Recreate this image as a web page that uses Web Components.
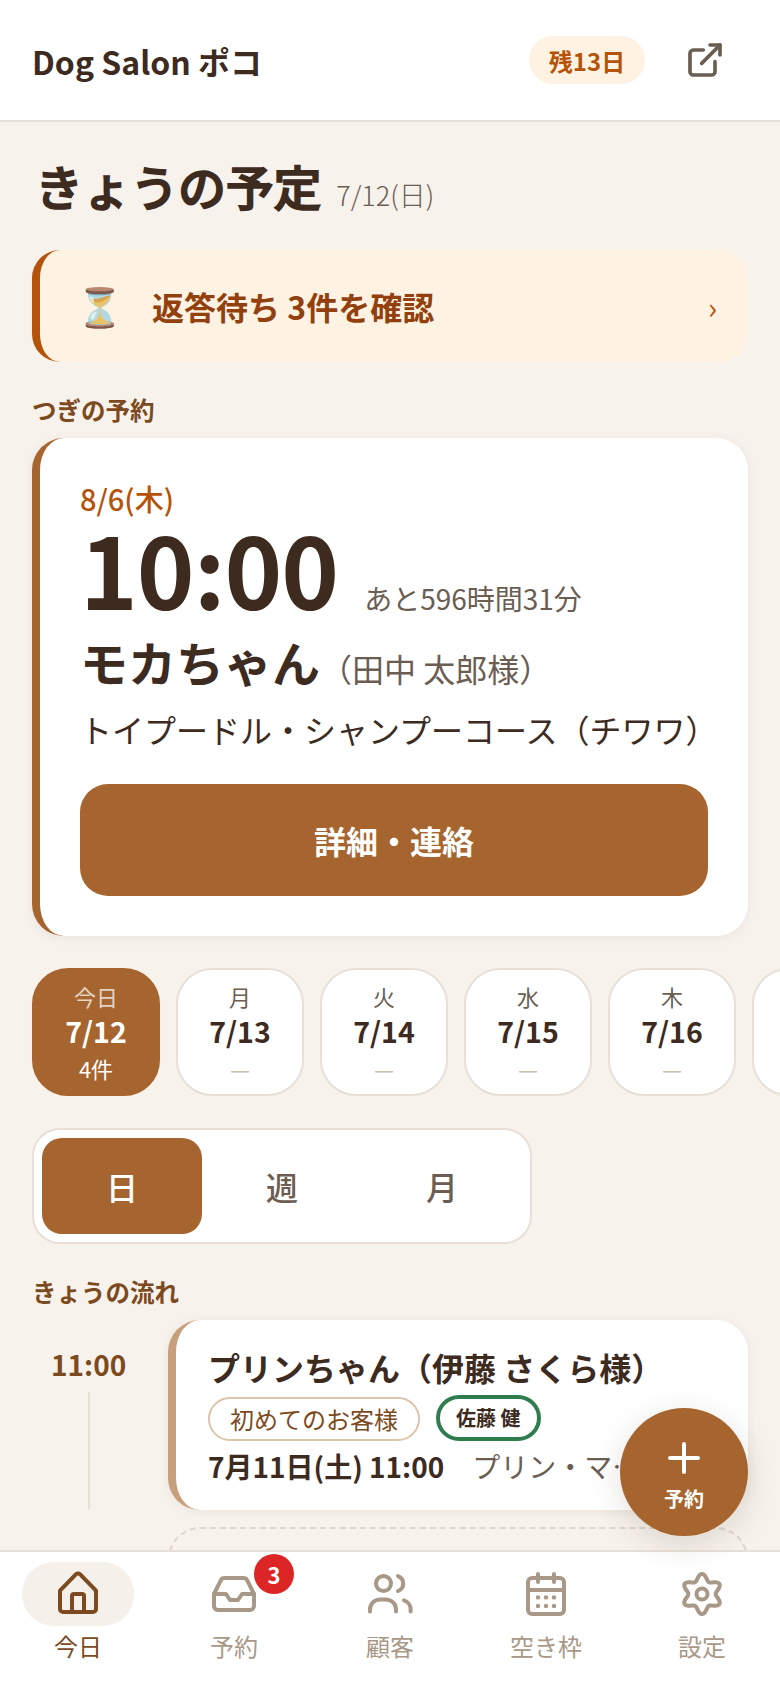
<!DOCTYPE html>
<html lang="ja"><head><meta charset="utf-8"><title>Dog Salon ポコ</title>
<style>
html,body{margin:0;padding:0;height:100%;background:#f7f2ec;overflow:hidden}
body{font-family:"Noto Sans CJK JP","Noto Sans",sans-serif;color:#3d2b1f;width:780px;height:1688px;position:relative;overflow:hidden}
</style></head><body>
<app-shell></app-shell>
<script>
const FONT='"Noto Sans CJK JP","Noto Sans",sans-serif';
function def(name,css,html){
  customElements.define(name,class extends HTMLElement{
    constructor(){super();const r=this.attachShadow({mode:'open'});r.innerHTML='<style>'+css+'</style>'+(typeof html==='function'?html(this):html);}
  });
}
def('app-header',`:host{display:flex;align-items:center;height:120px;border-bottom:2px solid #e8dfd6;background:#fff;padding:0 32px;box-sizing:content-box}
.t{flex:1;font-size:32px;font-weight:700;line-height:1;padding-top:2px}
.p{display:flex;align-items:center;justify-content:center;width:116px;height:48px;border-radius:24px;background:#fef3e2;color:#b45309;font-size:24px;font-weight:700;margin-right:40px}
svg{display:block;margin-right:23px}`,
`<div class="t"><slot></slot></div><div class="p">残13日</div>
<svg width="40" height="40" viewBox="0 0 24 24" fill="none" stroke="#6b5d52" stroke-width="2.2" stroke-linecap="round" stroke-linejoin="round"><path d="M18 13v6a2 2 0 0 1-2 2H5a2 2 0 0 1-2-2V8a2 2 0 0 1 2-2h6"/><path d="M15 3h6v6"/><path d="M10 14L21 3"/></svg>`);

def('page-title',`:host{display:flex;align-items:baseline;padding:37px 35px 0;height:88px;box-sizing:border-box}
h1{margin:0;font-size:48px;font-weight:500;line-height:52px;-webkit-text-stroke:1.6px #3d2b1f;letter-spacing:-.3px}
span{font-size:27px;font-weight:200;color:#6b5d52;margin-left:15px;letter-spacing:0}`,
`<h1><slot></slot></h1><span><slot name="sub"></slot></span>`);

def('notice-banner',`:host{display:flex;align-items:center;height:112px;margin:40px 32px 0;border-left:8px solid #b45309;border-radius:28px;background:#fef3e2;box-sizing:border-box;color:#92400e;font-weight:700;padding-left:36px;padding-right:31px}
.e{width:76px;flex:none;font-size:38px;line-height:1;font-weight:400;font-family:"Noto Color Emoji",${FONT};margin-top:4px;filter:hue-rotate(-8deg) saturate(.62)}
.m{flex:1;font-size:32px}
.c{font-size:30px;font-weight:400;color:#b45309}`,
`<span class="e">⏳</span><span class="m"><slot></slot></span><span class="c">›</span>`);

def('section-label',`:host{display:block;font-size:24.5px;font-weight:700;color:#7c4a1e;line-height:36px;margin:0 32px}`,`<slot></slot>`);

def('next-card',`:host{display:block;margin:0 32px;background:#fff;border-left:8px solid #a6652e;border-radius:32px;box-shadow:0 2px 12px rgba(60,40,20,.06);box-sizing:border-box;height:498px;padding:42px 40px 40px 40px}
.d{font-size:29px;font-weight:500;color:#b45309;line-height:36px}
.r{display:flex;align-items:baseline;height:109px;padding-top:6px}
.t{font-size:98px;font-weight:700;line-height:90px;letter-spacing:-1px}
.a{font-size:28px;color:#6b5d52;margin-left:26px}
.n{font-size:48px;font-weight:700;line-height:60px;white-space:nowrap}
.n span{font-size:32px;font-weight:400;color:#6b5d52}
.s{font-size:32px;line-height:44px;margin-top:9px;white-space:nowrap}
button{display:block;width:100%;height:112px;border:0;border-radius:28px;background:#a6652e;color:#fff;font:700 32px ${FONT};margin-top:33px}`,
`<div class="d">8/6(木)</div><div class="r"><span class="t">10:00</span><span class="a">あと596時間31分</span></div>
<div class="n">モカちゃん<span>（田中 太郎様）</span></div><div class="s">トイプードル・シャンプーコース（チワワ）</div><button>詳細・連絡</button>`);

def('day-strip',`:host{display:flex;gap:16px;margin-top:32px;padding-left:32px;overflow:hidden;width:780px;box-sizing:border-box}`,`<slot></slot>`);
def('day-chip',`:host{flex:none;display:flex;flex-direction:column;align-items:center;width:128px;height:128px;border:2px solid #e8dfd6;border-radius:36px;background:#fff;box-sizing:border-box;padding-top:10px}
:host([active]){background:#a6652e;border-color:#a6652e;color:#fff}
.l{font-size:22px;line-height:32px;color:#6b5d52}
:host([active]) .l{color:rgba(255,255,255,.72)}
.d{font-size:28.5px;font-weight:700;line-height:38px}
.c{font-size:22px;line-height:32px;color:#c8bdb2;margin-top:2px}
:host([active]) .c{color:#fff}`,
t=>`<div class="l">${t.getAttribute('l')}</div><div class="d">${t.getAttribute('d')}</div><div class="c">${t.getAttribute('c')}</div>`);

def('view-switch',`:host{display:flex;width:500px;height:116px;margin:32px 0 0 32px;border:2px solid #e8dfd6;border-radius:28px;background:#fff;box-sizing:border-box;padding:8px}
div{width:160px;display:flex;align-items:center;justify-content:center;font-size:32px;font-weight:500;color:#6b5d52;border-radius:20px}
.on{background:#a6652e;color:#fff}`,
`<div class="on">日</div><div>週</div><div>月</div>`);

def('flow-row',`:host{display:flex;margin:0 32px 0 0;height:190px}
.tc{width:168px;flex:none;position:relative;box-sizing:border-box}
.tm{position:absolute;left:51px;top:22px;font-size:28px;font-weight:700;color:#7c4a1e;line-height:44px}
.ln{position:absolute;left:88px;top:72px;bottom:0;width:2px;background:#e8dfd6}
.cd{flex:1;min-width:0;background:#fff;border-left:8px solid #c89f7c;border-radius:32px;box-shadow:0 2px 12px rgba(60,40,20,.06);box-sizing:border-box;padding:25px 32px 0 32px;overflow:hidden}
.h{font-size:32px;font-weight:700;line-height:44px;white-space:nowrap}
.tags{display:flex;align-items:center;gap:16px;margin-top:6px;height:46px}
.tag{height:44px;border:2px solid #dcc4ac;border-radius:22px;font-size:24px;line-height:40px;padding:0 20px;color:#7c4a1e;box-sizing:border-box;margin-top:2px}
.st{height:46px;border:4px solid #2f7d4f;border-radius:23px;font-size:20px;font-weight:700;line-height:38px;padding:0 16px;box-sizing:border-box}
.b{display:flex;gap:28px;font-size:28px;line-height:40px;white-space:nowrap;margin-top:5px}
.b b{font-weight:700}.b span{color:#6b5d52}`,
`<div class="tc"><div class="tm">11:00</div><div class="ln"></div></div>
<div class="cd"><div class="h">プリンちゃん（伊藤 さくら様）</div><div class="tags"><span class="tag">初めてのお客様</span><span class="st">佐藤 健</span></div>
<div class="b"><b>7月11日(土) 11:00</b><span>プリン・マ…</span></div></div>`);

def('open-slot',`:host{display:block;height:120px;margin:17px 32px 0 168px;border:2px dashed #e0d6cb;border-radius:32px;box-sizing:border-box}`,``);

const gear=(()=>{let p='';for(let i=0;i<=120;i++){const a=i/120*Math.PI*2;const r=8.35+1.6*Math.cos(6*a)+0.1*Math.cos(12*a);p+=(i?'L':'M')+(12+r*Math.sin(a)).toFixed(2)+' '+(12-r*Math.cos(a)).toFixed(2)}return p+'Z'})();
const ICONS={
 home:`<path d="M3 10.3 10.9 2.2a1.6 1.6 0 0 1 2.2 0L21 10.3V19.5a1.5 1.5 0 0 1-1.5 1.5h-15A1.5 1.5 0 0 1 3 19.5z"/><path d="M9 21v-8a1 1 0 0 1 1-1h4a1 1 0 0 1 1 1v8"/>`,
 inbox:`<path d="M22 12h-6l-2 3h-4l-2-3H2"/><path d="M5.45 5.11 2 12v6a2 2 0 0 0 2 2h16a2 2 0 0 0 2-2v-6l-3.45-6.89A2 2 0 0 0 16.76 4H7.24a2 2 0 0 0-1.79 1.11z"/>`,
 users:`<circle cx="8.75" cy="6.75" r="3.75"/><path d="M2 20.75v-1a5 5 0 0 1 5-5h3a5 5 0 0 1 5 5v1"/><path d="M16 3a4 4 0 0 1 0 7.5"/><path d="M19 15.2a4.5 4.5 0 0 1 3.3 4.3v1.25"/>`,
 cal:`<rect x="3" y="4" width="18" height="18" rx="2"/><path d="M8 2v4M16 2v4M3 10h18"/><g fill="currentColor" stroke="none"><circle cx="8" cy="13.7" r="1.1"/><circle cx="12" cy="13.7" r="1.1"/><circle cx="16" cy="13.7" r="1.1"/><circle cx="8" cy="18" r="1.1"/><circle cx="12" cy="18" r="1.1"/><circle cx="16" cy="18" r="1.1"/></g>`,
 gear:`<path d="${gear}"/><circle cx="12" cy="12" r="2.75"/>`
};
def('nav-item',`:host{flex:1;position:relative;display:flex;flex-direction:column;align-items:center;color:#a89888;font-size:24px;padding-top:10px}
:host([active]){color:#7c4a1e}
.i{width:112px;height:64px;border-radius:32px;display:flex;align-items:center;justify-content:center}
:host([active]) .i{background:#f5f0ea}
svg{display:block}
.l{line-height:36px;margin-top:2px}
.bd{position:absolute;left:98px;top:2px;width:40px;height:40px;border-radius:50%;background:#dc2626;color:#fff;font-size:22px;font-weight:700;display:flex;align-items:center;justify-content:center}`,
t=>`<div class="i"><svg width="48" height="48" viewBox="0 0 24 24" fill="none" stroke="currentColor" stroke-width="2" stroke-linecap="round" stroke-linejoin="round">${ICONS[t.getAttribute('icon')]}</svg></div><div class="l"><slot></slot></div>${t.hasAttribute('badge')?`<div class="bd">${t.getAttribute('badge')}</div>`:''}`);

def('bottom-nav',`:host{position:absolute;left:0;right:0;bottom:0;height:138px;background:#fff;border-top:2px solid #e8dfd6;box-sizing:border-box;display:flex}`,`<slot></slot>`);
def('fab-button',`:host{position:absolute;left:620px;top:1408px;width:128px;height:128px;border-radius:50%;background:#a6652e;color:#fff;display:flex;flex-direction:column;align-items:center;box-shadow:0 8px 32px rgba(60,40,20,.14);font-size:20px;font-weight:700;z-index:2}
svg{display:block;margin-top:30px}
span{line-height:28px;margin-top:7px}`,
`<svg width="40" height="40" viewBox="0 0 40 40" fill="none" stroke="#fff" stroke-width="4" stroke-linecap="round"><path d="M20 6v28M6 20h28"/></svg><span>予約</span>`);

def('app-shell',`:host{display:block;width:780px;height:1688px;position:relative;overflow:hidden;background:#f7f2ec;color:#3d2b1f;font-family:${FONT}}
.m{height:1550px;overflow:hidden}`,
`<div class="m"><app-header>Dog Salon ポコ</app-header>
<page-title>きょうの予定<span slot="sub">7/12(日)</span></page-title>
<notice-banner>返答待ち 3件を確認</notice-banner>
<section-label style="margin-top:30px;height:46px">つぎの予約</section-label>
<next-card></next-card>
<day-strip><day-chip active l="今日" d="7/12" c="4件"></day-chip><day-chip l="月" d="7/13" c="—"></day-chip><day-chip l="火" d="7/14" c="—"></day-chip><day-chip l="水" d="7/15" c="—"></day-chip><day-chip l="木" d="7/16" c="—"></day-chip><day-chip l="金" d="7/17" c="—"></day-chip></day-strip>
<view-switch></view-switch>
<section-label style="margin-top:30px;height:46px">きょうの流れ</section-label>
<flow-row></flow-row><open-slot></open-slot></div>
<fab-button></fab-button>
<bottom-nav><nav-item active icon="home">今日</nav-item><nav-item icon="inbox" badge="3">予約</nav-item><nav-item icon="users">顧客</nav-item><nav-item icon="cal">空き枠</nav-item><nav-item icon="gear">設定</nav-item></bottom-nav>`);
</script></body></html>
